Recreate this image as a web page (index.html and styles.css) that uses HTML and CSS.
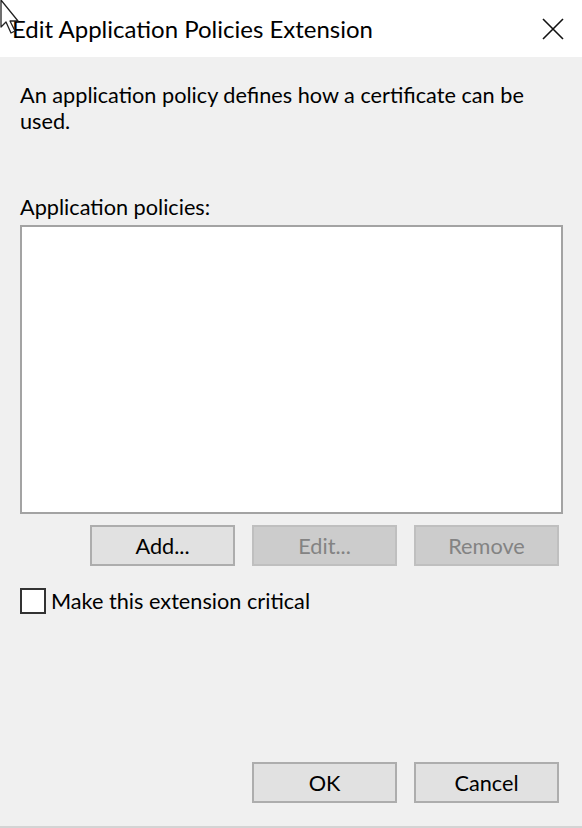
FILE: index.html
```html
<!DOCTYPE html>
<html>
<head>
<meta charset="utf-8">
<link rel="stylesheet" href="styles.css">
</head>
<body>
<div class="dialog">
  <div class="titlebar">
    <span class="title">Edit Application Policies Extension</span>
    <svg class="close" width="22" height="22" viewBox="0 0 22 22"><path d="M1 1 L21 21 M21 1 L1 21" stroke="#111" stroke-width="1.6"/></svg>
    <svg class="cursor" width="20" height="38" viewBox="0 0 20 38"><path d="M1 0 L1 27 L6 22 L11 33 L15 31 L10 21 L18 21 Z" fill="#fff" stroke="#222" stroke-width="1.3" stroke-linejoin="round"/></svg>
  </div>
  <div class="content">
    <p class="desc">An application policy defines how a certificate can be used.</p>
    <label class="list-label">Application policies:</label>
    <div class="listbox"></div>
    <div class="list-buttons">
      <button class="btn">Add...</button>
      <button class="btn disabled">Edit...</button>
      <button class="btn disabled">Remove</button>
    </div>
    <label class="check"><span class="box"></span><span>Make this extension critical</span></label>
    <div class="spacer"></div>
    <div class="footer">
      <button class="btn">OK</button>
      <button class="btn">Cancel</button>
    </div>
  </div>
</div>
</body>
</html>
```
FILE: styles.css
```css
* { box-sizing: border-box; }
html, body { margin: 0; padding: 0; }
body {
  width: 582px;
  height: 828px;
  background: #f0f0f0;
  font-family: Lato, "Noto Sans", sans-serif;
  color: #000;
  overflow: hidden;
}
.dialog {
  width: 582px;
  height: 828px;
  display: flex;
  flex-direction: column;
  border-bottom: 2px solid #d4d4d4;
}
.titlebar {
  position: relative;
  height: 57px;
  background: #fff;
  display: flex;
  align-items: center;
  padding: 0 18px 0 12px;
  flex-shrink: 0;
}
.title {
  font-size: 24px;
  flex: 1;
  color: #000;
}
.close { display: block; }
.cursor {
  position: absolute;
  left: 0;
  top: 0;
}
.content {
  flex: 1;
  display: flex;
  flex-direction: column;
  padding: 25px 19px 23px 20px;
  font-size: 21.7px;
}
.desc {
  margin: 0;
  line-height: 26px;
  width: 543px;
}
.list-label {
  margin-top: 60px;
  line-height: 26px;
}
.listbox {
  margin-top: 5px;
  height: 289px;
  background: #fff;
  border: 2px solid #a3a3a3;
}
.list-buttons {
  margin-top: 11px;
  display: flex;
  justify-content: flex-end;
  gap: 17px;
  padding-right: 4px;
}
.btn {
  width: 145px;
  height: 41px;
  background: #e1e1e1;
  border: 2px solid #adadad;
  font-family: inherit;
  font-size: 21.7px;
  color: #000;
  padding: 0;
}
.btn.disabled {
  background: #cccccc;
  border-color: #bfbfbf;
  color: #838383;
}
.check {
  margin-top: 22px;
  display: flex;
  align-items: center;
  gap: 5px;
}
.box {
  width: 26px;
  height: 26px;
  border: 2px solid #333;
  background: #fff;
}
.spacer { flex: 1; }
.footer {
  display: flex;
  justify-content: flex-end;
  gap: 17px;
  padding-right: 4px;
}
```
